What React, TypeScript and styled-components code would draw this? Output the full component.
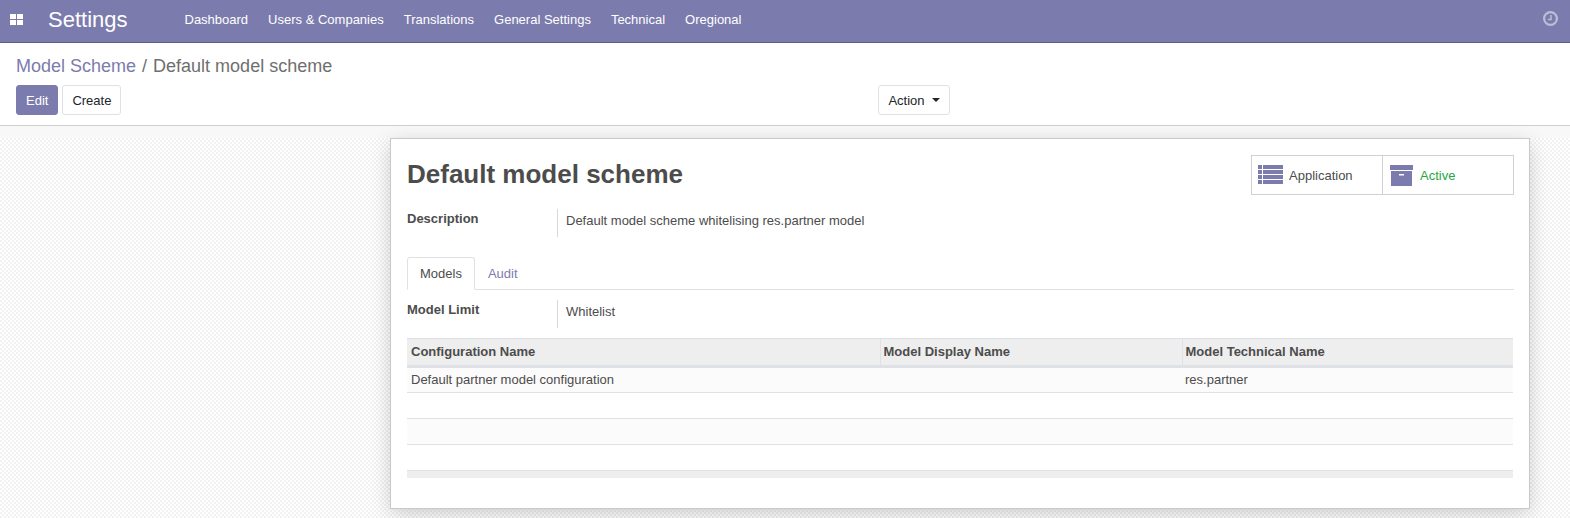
import React from "react";
import styled, { createGlobalStyle } from "styled-components";

const Global = createGlobalStyle`
  html, body { margin: 0; padding: 0; height: 100%; }
  body { font-family: "Liberation Sans", Arial, sans-serif; font-size: 13px; color: #4c4c4c; background: #fff; overflow: hidden; }
  #root { height: 100%; }
  * { box-sizing: border-box; }
`;

const Page = styled.div`
  height: 518px;
  display: flex;
  flex-direction: column;
`;

const NavBar = styled.header`
  height: 43px;
  flex: none;
  display: flex;
  align-items: center;
  background: #7c7bad;
  border-bottom: 1px solid #5f5e8b;
  color: #fff;
  padding: 0 12px 3px 10px;
`;

const AppsIcon = styled.svg`
  width: 13px;
  height: 11px;
  margin-right: 25px;
  flex: none;
`;

const Brand = styled.span`
  font-size: 22px;
  margin-right: 57px;
  line-height: 26px;
`;

const Menu = styled.nav`
  display: flex;
  gap: 20px;
  flex: 1;
`;

const MenuItem = styled.a`
  font-size: 13px;
  color: #fff;
`;

const ClockIcon = styled.svg`
  width: 15px;
  height: 15px;
  margin-top: -3px;
`;

const ControlPanel = styled.section`
  height: 83px;
  flex: none;
  background: #fff;
  border-bottom: 1px solid #cfcfcf;
  padding: 13px 16px 0;
`;

const Breadcrumb = styled.div`
  font-size: 18px;
  line-height: 21px;
  color: #6f6f6f;
  display: flex;
  gap: 6px;
  margin-bottom: 8px;
`;

const Crumb = styled.a`
  color: #7c7bad;
`;

const Actions = styled.div`
  display: flex;
  height: 30px;
`;

const Button = styled.button<{ $primary?: boolean }>`
  height: 30px;
  padding: 0 9px;
  font: inherit;
  font-size: 13px;
  border-radius: 3px;
  border: 1px solid ${(p) => (p.$primary ? "#7c7bad" : "#dee2e6")};
  background: ${(p) => (p.$primary ? "#7c7bad" : "#fff")};
  color: ${(p) => (p.$primary ? "#fff" : "#212529")};
  margin-right: 4px;
`;

const ActionSlot = styled.div`
  margin-left: 753px;
`;

const Caret = styled.span`
  display: inline-block;
  margin-left: 7px;
  vertical-align: 3px;
  border-top: 4px solid #212529;
  border-left: 4px solid transparent;
  border-right: 4px solid transparent;
`;

const Content = styled.main`
  flex: 1;
  display: flex;
  justify-content: flex-end;
  padding: 12px 40px 9px 0;
  background-color: #fff;
  background-image:
    linear-gradient(#f8f8f8, #f8f8f8 12px, transparent 12px),
    repeating-conic-gradient(#f2f2f2 0 25%, #fff 0 50%);
  background-size: 100% 100%, 4px 4px;
`;

const Sheet = styled.article`
  width: 1140px;
  height: 371px;
  background: #fff;
  border: 1px solid #c8c8d0;
  box-shadow: 0 5px 20px -1px rgba(0, 0, 0, 0.2);
  padding: 16px 15px 0 16px;
`;

const Head = styled.div`
  display: flex;
  justify-content: space-between;
  height: 54px;
`;

const Title = styled.h1`
  margin: 0;
  font-size: 26px;
  font-weight: 700;
  line-height: 38px;
  color: #4c4c4c;
`;

const StatBox = styled.div`
  display: flex;
  width: 263px;
  height: 40px;
  border: 1px solid #cfcfd4;
`;

const Stat = styled.div<{ $active?: boolean }>`
  width: 130px;
  display: flex;
  align-items: center;
  gap: 6px;
  padding-left: 6px;
  color: ${(p) => (p.$active ? "#28a745" : "#4c4c4c")};
  & + & { border-left: 1px solid #cfcfd4; width: 131px; }
`;

const StatIcon = styled.svg`
  width: 25px;
  height: 22px;
  flex: none;
`;

const Field = styled.div`
  display: flex;
  min-height: 28px;
`;

const FieldLabel = styled.div`
  width: 150px;
  padding-top: 2px;
  font-weight: 700;
  line-height: 16px;
`;

const FieldValue = styled.div`
  border-left: 1px solid #d8d8d8;
  height: 28px;
  padding: 4px 0 0 8px;
  line-height: 16px;
`;

const Tabs = styled.div`
  display: flex;
  margin-top: 20px;
  height: 33px;
  border-bottom: 1px solid #dee2e6;
  margin-bottom: 10px;
`;

const Tab = styled.a<{ $active?: boolean }>`
  height: 33px;
  padding: 8px 12px 0 12px;
  line-height: 16px;
  border: 1px solid ${(p) => (p.$active ? "#dee2e6" : "transparent")};
  border-bottom-color: ${(p) => (p.$active ? "#fff" : "transparent")};
  border-radius: 3px 3px 0 0;
  color: ${(p) => (p.$active ? "#4c4c4c" : "#7c7bad")};
  background: ${(p) => (p.$active ? "#fff" : "transparent")};
`;

const Grid = styled.table`
  width: 1106px;
  margin-top: 10px;
  border-collapse: collapse;
  table-layout: fixed;
`;

const HeadCell = styled.th`
  height: 28px;
  padding: 0 4px 2px;
  background: #eeeeee;
  border-top: 1px solid #dee2e6;
  border-bottom: 3px solid #dee2e6;
  text-align: left;
  font-weight: 700;
  & + & { border-left: 1px solid #dee2e6; padding-left: 3px; }
`;

const Row = styled.tr<{ $odd?: boolean }>`
  background: ${(p) => (p.$odd ? "#fbfbfb" : "#fff")};
`;

const Cell = styled.td`
  height: 26px;
  padding: 0 4px 2px;
  border-bottom: 1px solid #dee2e6;
  & + & { padding-left: 3px; }
`;

const FootCell = styled.td`
  height: 7px;
  padding: 0;
  background: #eeeeee;
`;

const widths = [473, 302, 331];

export default function App() {
  return (
    <Page>
      <Global />
      <NavBar>
        <AppsIcon viewBox="0 0 13 11">
          <path fill="#fff" d="M0 0h6v5H0zM7 0h6v5H7zM0 6h6v5H0zM7 6h6v5H7z" />
        </AppsIcon>
        <Brand>Settings</Brand>
        <Menu>
          <MenuItem>Dashboard</MenuItem>
          <MenuItem>Users &amp; Companies</MenuItem>
          <MenuItem>Translations</MenuItem>
          <MenuItem>General Settings</MenuItem>
          <MenuItem>Technical</MenuItem>
          <MenuItem>Oregional</MenuItem>
        </Menu>
        <ClockIcon viewBox="0 0 15 15">
          <circle cx="7.5" cy="7.5" r="6.4" fill="none" stroke="#fff" strokeOpacity="0.5" strokeWidth="2.2" />
          <path d="M8 4v4.5H5" fill="none" stroke="#fff" strokeOpacity="0.5" strokeWidth="1.5" />
        </ClockIcon>
      </NavBar>
      <ControlPanel>
        <Breadcrumb>
          <Crumb>Model Scheme</Crumb>
          <span>/</span>
          <span>Default model scheme</span>
        </Breadcrumb>
        <Actions>
          <Button $primary>Edit</Button>
          <Button>Create</Button>
          <ActionSlot>
            <Button>
              Action
              <Caret />
            </Button>
          </ActionSlot>
        </Actions>
      </ControlPanel>
      <Content>
        <Sheet>
          <Head>
            <Title>Default model scheme</Title>
            <StatBox>
              <Stat>
                <StatIcon viewBox="0 0 25 22">
                  <path
                    fill="#7c7bad"
                    d="M0 1h4v4H0zM5 1h20v4H5zM0 6h4v4H0zM5 6h20v4H5zM0 11h4v4H0zM5 11h20v4H5zM0 16h4v4H0zM5 16h20v4H5z"
                  />
                </StatIcon>
                Application
              </Stat>
              <Stat $active>
                <StatIcon viewBox="0 0 25 22">
                  <path fill="#7c7bad" fillRule="evenodd" d="M1 1h23v5H1zM2 7h21v15H2zM10 10v1.5h5V10z" />
                </StatIcon>
                Active
              </Stat>
            </StatBox>
          </Head>
          <Field>
            <FieldLabel>Description</FieldLabel>
            <FieldValue>Default model scheme whitelising res.partner model</FieldValue>
          </Field>
          <Tabs>
            <Tab $active>Models</Tab>
            <Tab>Audit</Tab>
          </Tabs>
          <Field>
            <FieldLabel>Model Limit</FieldLabel>
            <FieldValue>Whitelist</FieldValue>
          </Field>
          <Grid>
            <colgroup>
              {widths.map((w) => (
                <col key={w} width={w} />
              ))}
            </colgroup>
            <thead>
              <tr>
                <HeadCell>Configuration Name</HeadCell>
                <HeadCell>Model Display Name</HeadCell>
                <HeadCell>Model Technical Name</HeadCell>
              </tr>
            </thead>
            <tbody>
              <Row $odd>
                <Cell>Default partner model configuration</Cell>
                <Cell />
                <Cell>res.partner</Cell>
              </Row>
              <Row>
                <Cell />
                <Cell />
                <Cell />
              </Row>
              <Row $odd>
                <Cell />
                <Cell />
                <Cell />
              </Row>
              <Row>
                <Cell />
                <Cell />
                <Cell />
              </Row>
            </tbody>
            <tfoot>
              <tr>
                <FootCell colSpan={3} />
              </tr>
            </tfoot>
          </Grid>
        </Sheet>
      </Content>
    </Page>
  );
}
